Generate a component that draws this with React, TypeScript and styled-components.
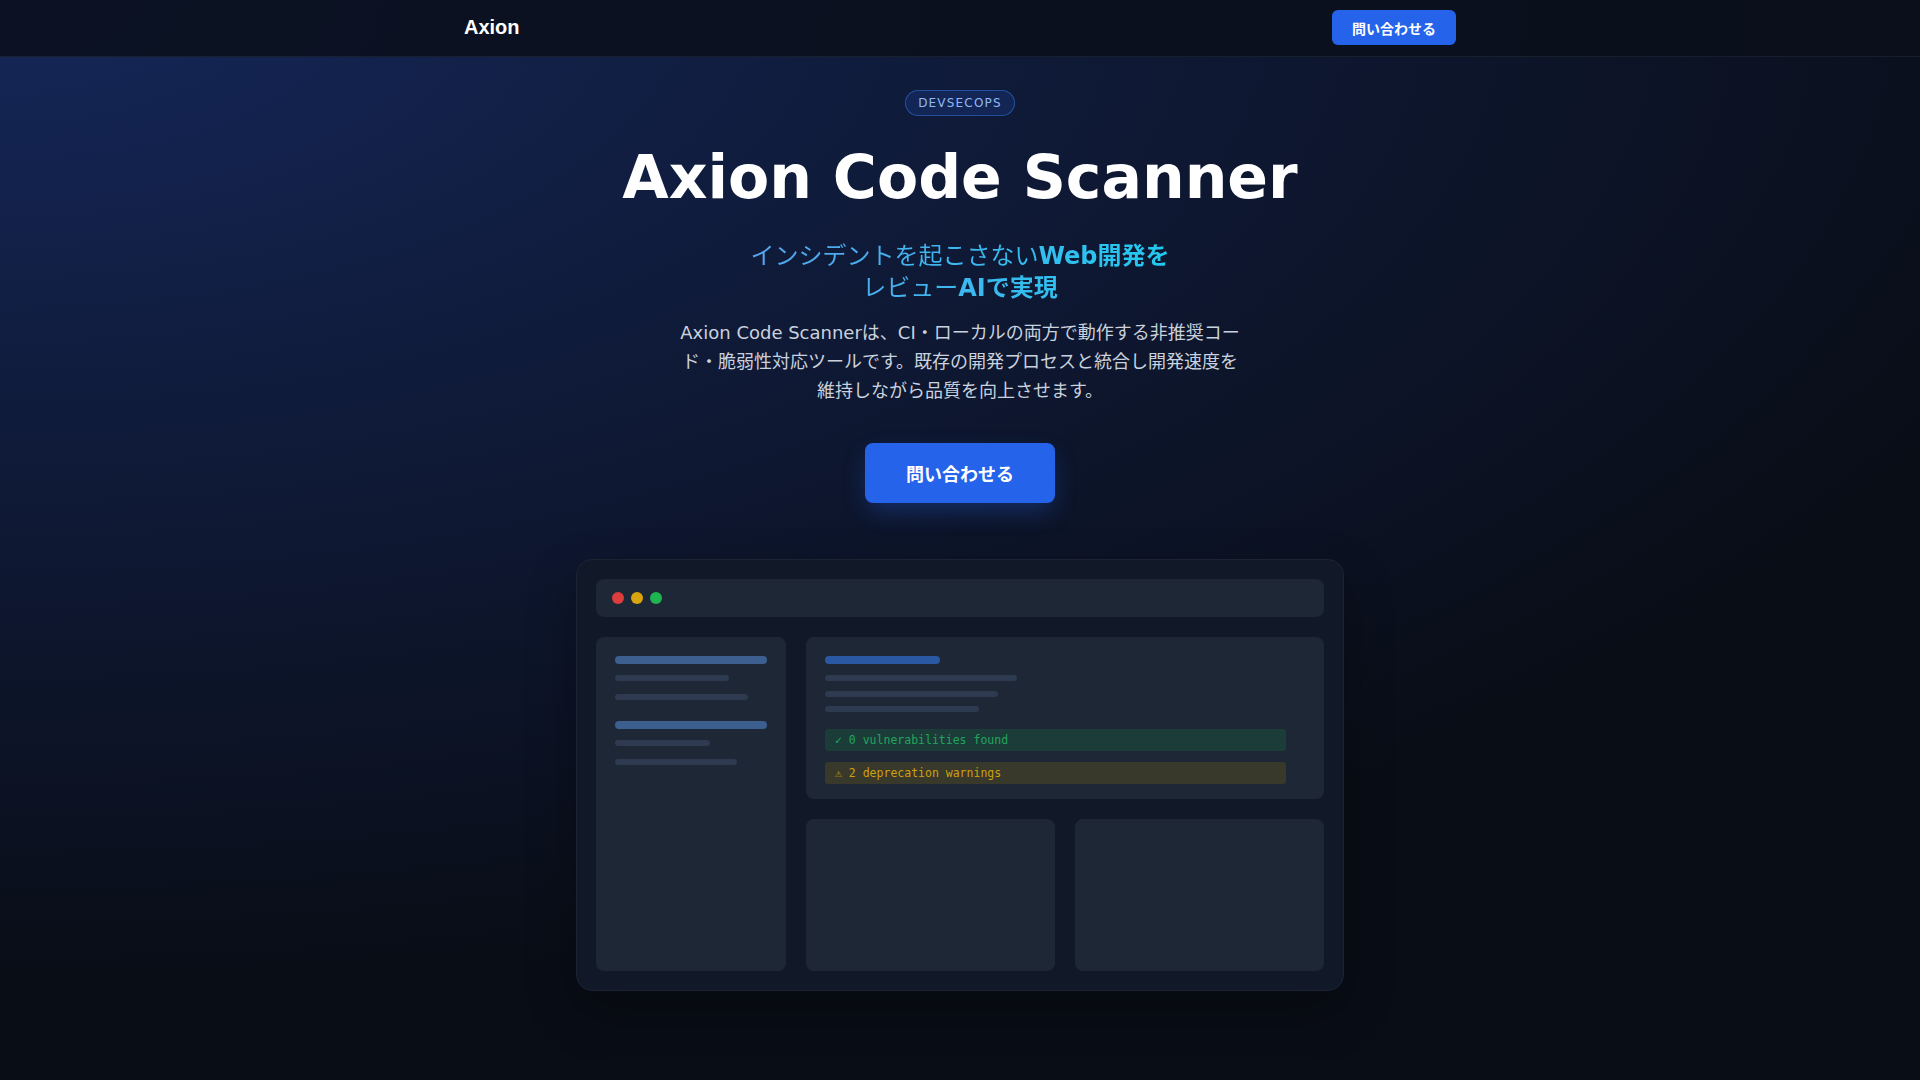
import styled, { createGlobalStyle } from "styled-components";

const GlobalStyle = createGlobalStyle`
  html, body {
    margin: 0;
    padding: 0;
    background: #090d16;
  }
  body {
    font-family: "DejaVu Sans", "Noto Sans CJK JP", sans-serif;
    color: #ffffff;
    -webkit-font-smoothing: antialiased;
  }
  * {
    box-sizing: border-box;
  }
`;

const sidebarGroups = [
  { lines: [{ w: "75%", mt: 11 }, { w: "87.5%", mt: 13 }] },
  { lines: [{ w: "62.5%", mt: 11 }, { w: "80%", mt: 13 }] },
];

const summaryLines = [
  { w: "40%", mt: 11 },
  { w: "36%", mt: 9.5 },
  { w: "32%", mt: 9.5 },
];

const App = () => {
  return (
    <Page>
      <GlobalStyle />
      <NavBar>
        <NavInner>
          <Logo>Axion</Logo>
          <NavButton>問い合わせる</NavButton>
        </NavInner>
      </NavBar>

      <Hero>
        <Badge>DEVSECOPS</Badge>
        <Title>Axion Code Scanner</Title>
        <Subtitle>
          インシデントを起こさない<strong>Web開発を</strong>
          <br />
          レビュー<strong>AIで実現</strong>
        </Subtitle>
        <Lead>
          Axion Code Scannerは、CI・ローカルの両方で動作する非推奨コード・脆弱性対応ツールです。既存の開発プロセスと統合し開発速度を維持しながら品質を向上させます。
        </Lead>
        <CtaButton>問い合わせる</CtaButton>

        <MockWindow>
          <TitleBar>
            <Dot $color="#dc3d3d" />
            <Dot $color="#d9a40d" />
            <Dot $color="#20b352" />
          </TitleBar>
          <MockGrid>
            <SidePanel>
              {sidebarGroups.map((group, gi) => (
                <BarGroup key={gi} $first={gi === 0}>
                  <Bar $w="100%" $h={8} $tone="#3c5f8f" />
                  {group.lines.map((line, li) => (
                    <Bar key={li} $w={line.w} $h={6} $mt={line.mt} />
                  ))}
                </BarGroup>
              ))}
            </SidePanel>
            <MainColumn>
              <SummaryPanel>
                <Bar $w="24%" $h={8} $tone="#2b58a2" />
                {summaryLines.map((line, i) => (
                  <Bar key={i} $w={line.w} $h={6} $mt={line.mt} />
                ))}
                <Status $variant="ok">✓ 0 vulnerabilities found</Status>
                <Status $variant="warn">⚠ 2 deprecation warnings</Status>
              </SummaryPanel>
              <BottomRow>
                <EmptyPanel />
                <EmptyPanel />
              </BottomRow>
            </MainColumn>
          </MockGrid>
        </MockWindow>
      </Hero>
    </Page>
  );
};

export default App;

const Page = styled.div`
  min-height: 100vh;
  background:
    radial-gradient(
      ellipse 2200px 990px at 0 0,
      rgba(30, 58, 138, 0.58) 0%,
      rgba(30, 58, 138, 0.3) 45%,
      rgba(30, 58, 138, 0) 100%
    ),
    #090d16;
  padding-bottom: 89px;
`;

const NavBar = styled.header`
  height: 57px;
  background: rgba(10, 15, 27, 0.86);
  border-bottom: 1px solid rgba(148, 163, 184, 0.1);
`;

const NavInner = styled.div`
  max-width: 992px;
  height: 100%;
  margin: 0 auto;
  display: flex;
  align-items: center;
  justify-content: space-between;
`;

const Logo = styled.span`
  font: 700 20px "Liberation Sans", sans-serif;
  color: #ffffff;
  margin-top: -1px;
`;

const NavButton = styled.button`
  height: 35px;
  padding: 0 20px;
  margin-top: -1px;
  border: none;
  border-radius: 6px;
  background: #2563eb;
  color: #ffffff;
  font: 700 14px "Noto Sans CJK JP", sans-serif;
  cursor: pointer;
`;

const Hero = styled.main`
  display: flex;
  flex-direction: column;
  align-items: center;
  text-align: center;
  padding-top: 33px;
`;

const Badge = styled.span`
  display: inline-block;
  padding: 4px 12px;
  border: 1px solid rgba(59, 130, 246, 0.45);
  border-radius: 999px;
  background: rgba(37, 99, 235, 0.16);
  color: #8fb8f5;
  font: 400 12px/16px "DejaVu Sans", sans-serif;
  letter-spacing: 0.1em;
`;

const Title = styled.h1`
  margin: 28px 0 0;
  font: 700 60px/66px "DejaVu Sans", sans-serif;
  color: #ffffff;
`;

const Subtitle = styled.h2`
  display: inline-block;
  margin: 30px 0 0;
  font: 400 24px/32px "DejaVu Sans", "Noto Sans CJK JP", sans-serif;
  background: linear-gradient(to right, #58a5f0, #22c9ef);
  -webkit-background-clip: text;
  background-clip: text;
  color: transparent;

  strong {
    font-weight: 700;
  }
`;

const Lead = styled.p`
  max-width: 570px;
  margin: 15px 0 0;
  font: 400 18px/28.8px "DejaVu Sans", "Noto Sans CJK JP", sans-serif;
  color: #c9d2de;
`;

const CtaButton = styled.button`
  margin-top: 38px;
  padding: 16px 41px;
  border: none;
  border-radius: 8px;
  background: #2563eb;
  color: #ffffff;
  font: 700 18px/28px "Noto Sans CJK JP", sans-serif;
  box-shadow: 0 10px 24px -4px rgba(37, 99, 235, 0.35);
  cursor: pointer;
`;

const MockWindow = styled.section`
  width: 768px;
  margin-top: 56px;
  padding: 19px;
  border: 1px solid #1c2434;
  border-radius: 16px;
  background: #111827;
  text-align: left;
  box-shadow: 0 20px 50px rgba(0, 0, 0, 0.3);
`;

const TitleBar = styled.div`
  height: 38px;
  display: flex;
  align-items: center;
  gap: 7px;
  padding: 0 16px;
  border-radius: 8px;
  background: #1e2736;
`;

const Dot = styled.span<{ $color: string }>`
  width: 12px;
  height: 12px;
  border-radius: 50%;
  background: ${(p) => p.$color};
`;

const MockGrid = styled.div`
  display: flex;
  gap: 20px;
  margin-top: 20px;
`;

const Panel = styled.div`
  border-radius: 8px;
  background: #1e2736;
`;

const SidePanel = styled(Panel)`
  width: 190px;
  flex-shrink: 0;
  padding: 19px;
`;

const BarGroup = styled.div<{ $first: boolean }>`
  display: flex;
  flex-direction: column;
  margin-top: ${(p) => (p.$first ? 0 : 21)}px;
`;

const Bar = styled.div<{ $w: string; $h: number; $tone?: string; $mt?: number }>`
  width: ${(p) => p.$w};
  height: ${(p) => p.$h}px;
  margin-top: ${(p) => p.$mt ?? 0}px;
  border-radius: 4px;
  background: ${(p) => p.$tone ?? "#2d3a4f"};
`;

const MainColumn = styled.div`
  flex: 1;
  display: flex;
  flex-direction: column;
  gap: 20px;
`;

const SummaryPanel = styled(Panel)`
  display: flex;
  flex-direction: column;
  padding: 19px 19px 15px;
`;

const Status = styled.div<{ $variant: "ok" | "warn" }>`
  width: 96%;
  height: 22px;
  display: flex;
  align-items: center;
  padding: 0 10px;
  border-radius: 3px;
  white-space: pre;
  font: 400 11.5px/14px "DejaVu Sans Mono", monospace;
  margin-top: ${(p) => (p.$variant === "ok" ? 17 : 10.5)}px;
  background: ${(p) => (p.$variant === "ok" ? "#1c3c3a" : "#38392b")};
  color: ${(p) => (p.$variant === "ok" ? "#22a55a" : "#cfa00f")};
`;

const BottomRow = styled.div`
  display: flex;
  gap: 20px;
`;

const EmptyPanel = styled(Panel)`
  flex: 1;
  height: 152px;
`;
